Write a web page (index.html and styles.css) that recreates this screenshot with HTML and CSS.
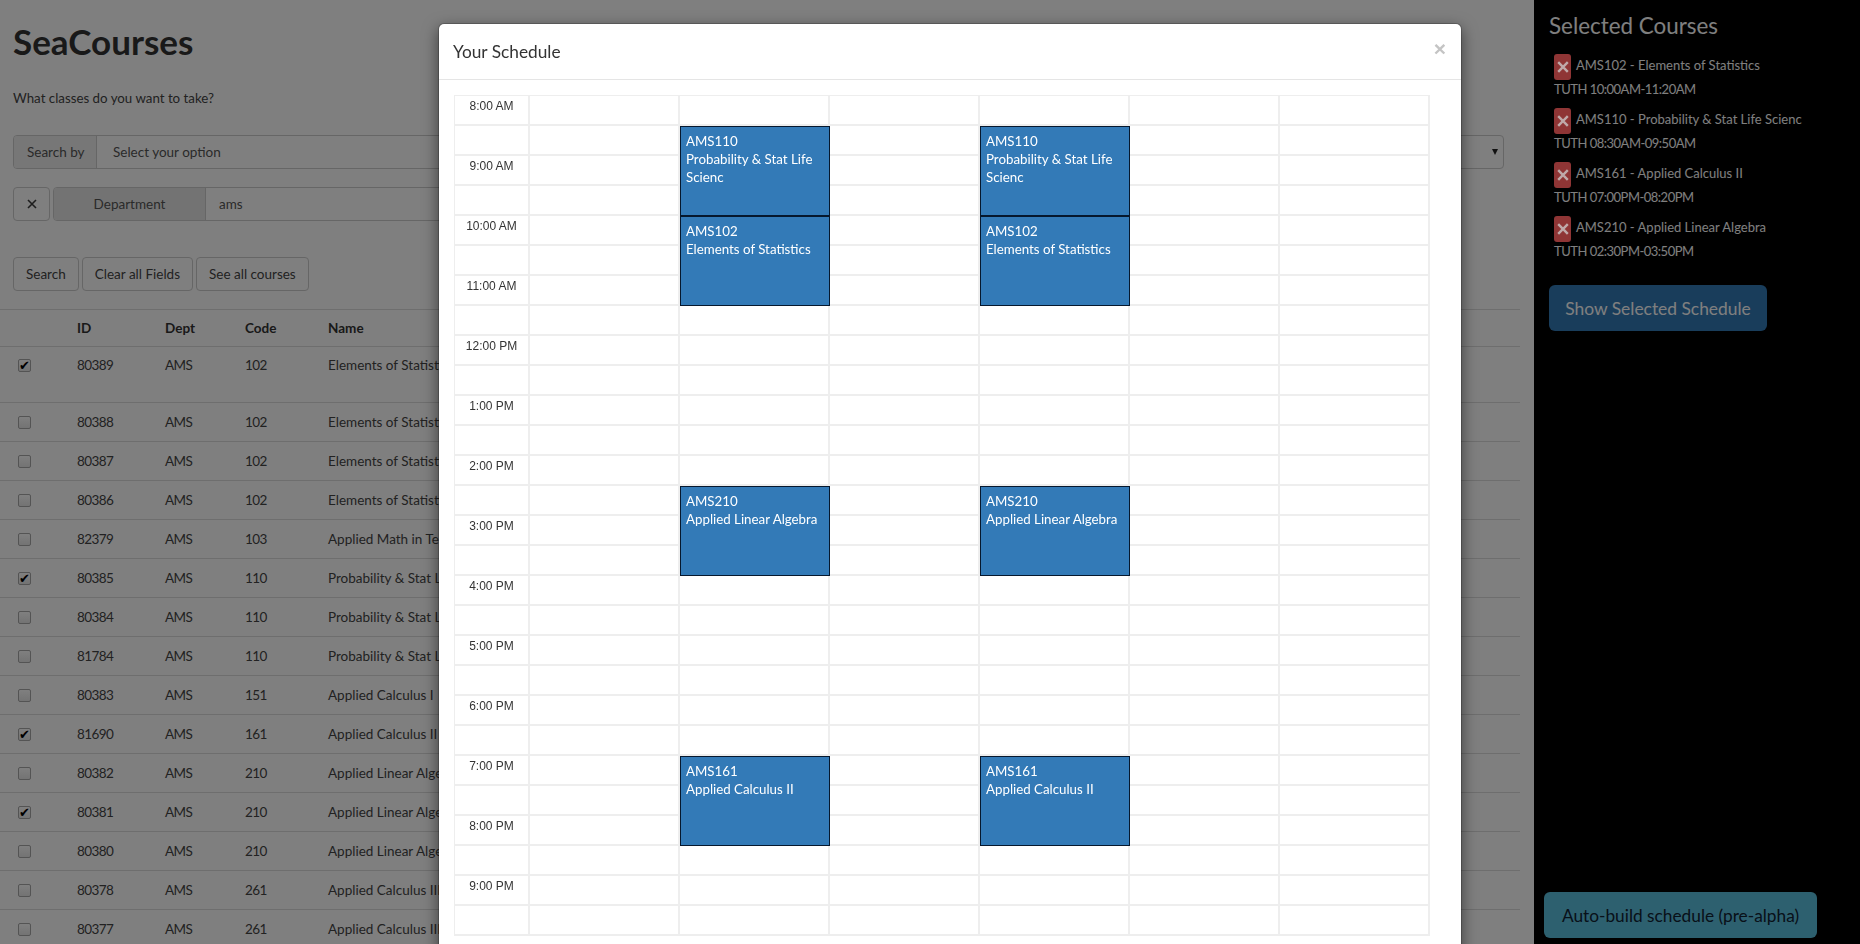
FILE: index.html
```html
<!DOCTYPE html>
<html lang="en">
<head>
<meta charset="utf-8">
<title>SeaCourses</title>
<link rel="stylesheet" href="styles.css">
</head>
<body>
<svg class="defs" width="0" height="0" aria-hidden="true"><symbol id="x" viewBox="0 0 10 10"><path d="M1 1 9 9M9 1 1 9" fill="none" stroke="currentColor"/></symbol></svg>
<div class="app">
  <main class="main">
    <h1 class="brand">SeaCourses</h1>
    <p class="lead">What classes do you want to take?</p>
    <div class="field search-by">
      <span class="addon">Search by</span>
      <span class="select-value">Select your option</span>
      <span class="arrow"></span>
    </div>
    <div class="filter-row">
      <button class="btn square"><svg class="x-icon"><use href="#x"/></svg></button>
      <div class="field filter">
        <span class="addon wide">Department</span>
        <span class="select-value short">ams</span>
      </div>
    </div>
    <div class="actions">
      <button class="btn">Search</button>
      <button class="btn">Clear all Fields</button>
      <button class="btn">See all courses</button>
    </div>
    <table class="courses">
      <thead><tr><th class="c0"></th><th class="c1">ID</th><th class="c2">Dept</th><th class="c3">Code</th><th>Name</th></tr></thead>
      <tbody>
        <tr class="tall"><td><input type="checkbox" checked></td><td>80389</td><td>AMS</td><td>102</td><td>Elements of Statistics</td></tr>
        <tr><td><input type="checkbox"></td><td>80388</td><td>AMS</td><td>102</td><td>Elements of Statistics</td></tr>
        <tr><td><input type="checkbox"></td><td>80387</td><td>AMS</td><td>102</td><td>Elements of Statistics</td></tr>
        <tr><td><input type="checkbox"></td><td>80386</td><td>AMS</td><td>102</td><td>Elements of Statistics</td></tr>
        <tr><td><input type="checkbox"></td><td>82379</td><td>AMS</td><td>103</td><td>Applied Math in Technology</td></tr>
        <tr><td><input type="checkbox" checked></td><td>80385</td><td>AMS</td><td>110</td><td>Probability &amp; Stat Life Scienc</td></tr>
        <tr><td><input type="checkbox"></td><td>80384</td><td>AMS</td><td>110</td><td>Probability &amp; Stat Life Scienc</td></tr>
        <tr><td><input type="checkbox"></td><td>81784</td><td>AMS</td><td>110</td><td>Probability &amp; Stat Life Scienc</td></tr>
        <tr><td><input type="checkbox"></td><td>80383</td><td>AMS</td><td>151</td><td>Applied Calculus I</td></tr>
        <tr><td><input type="checkbox" checked></td><td>81690</td><td>AMS</td><td>161</td><td>Applied Calculus II</td></tr>
        <tr><td><input type="checkbox"></td><td>80382</td><td>AMS</td><td>210</td><td>Applied Linear Algebra</td></tr>
        <tr><td><input type="checkbox" checked></td><td>80381</td><td>AMS</td><td>210</td><td>Applied Linear Algebra</td></tr>
        <tr><td><input type="checkbox"></td><td>80380</td><td>AMS</td><td>210</td><td>Applied Linear Algebra</td></tr>
        <tr><td><input type="checkbox"></td><td>80378</td><td>AMS</td><td>261</td><td>Applied Calculus III</td></tr>
        <tr><td><input type="checkbox"></td><td>80377</td><td>AMS</td><td>261</td><td>Applied Calculus III</td></tr>
      </tbody>
    </table>
  </main>
  <aside class="side">
    <h2 class="side-title">Selected Courses</h2>
    <ul class="picked">
      <li><div class="picked-line"><button class="del"><svg class="x-icon"><use href="#x"/></svg></button><span>AMS102 - Elements of Statistics</span></div><div class="picked-time">TUTH 10:00AM-11:20AM</div></li>
      <li><div class="picked-line"><button class="del"><svg class="x-icon"><use href="#x"/></svg></button><span>AMS110 - Probability &amp; Stat Life Scienc</span></div><div class="picked-time">TUTH 08:30AM-09:50AM</div></li>
      <li><div class="picked-line"><button class="del"><svg class="x-icon"><use href="#x"/></svg></button><span>AMS161 - Applied Calculus II</span></div><div class="picked-time">TUTH 07:00PM-08:20PM</div></li>
      <li><div class="picked-line"><button class="del"><svg class="x-icon"><use href="#x"/></svg></button><span>AMS210 - Applied Linear Algebra</span></div><div class="picked-time">TUTH 02:30PM-03:50PM</div></li>
    </ul>
    <button class="show-btn">Show Selected Schedule</button>
    <button class="auto-btn">Auto-build schedule (pre-alpha)</button>
  </aside>
</div>
<div class="backdrop"></div>
<div class="modal">
  <div class="modal-head"><h4>Your Schedule</h4><span class="close">×</span></div>
  <div class="modal-body">
    <div class="cal">
      <div class="cal-grid">
        <div class="cell time">8:00 AM</div><div class="cell"></div><div class="cell"></div><div class="cell"></div><div class="cell"></div><div class="cell"></div><div class="cell"></div>
        <div class="cell time"></div><div class="cell"></div><div class="cell"></div><div class="cell"></div><div class="cell"></div><div class="cell"></div><div class="cell"></div>
        <div class="cell time">9:00 AM</div><div class="cell"></div><div class="cell"></div><div class="cell"></div><div class="cell"></div><div class="cell"></div><div class="cell"></div>
        <div class="cell time"></div><div class="cell"></div><div class="cell"></div><div class="cell"></div><div class="cell"></div><div class="cell"></div><div class="cell"></div>
        <div class="cell time">10:00 AM</div><div class="cell"></div><div class="cell"></div><div class="cell"></div><div class="cell"></div><div class="cell"></div><div class="cell"></div>
        <div class="cell time"></div><div class="cell"></div><div class="cell"></div><div class="cell"></div><div class="cell"></div><div class="cell"></div><div class="cell"></div>
        <div class="cell time">11:00 AM</div><div class="cell"></div><div class="cell"></div><div class="cell"></div><div class="cell"></div><div class="cell"></div><div class="cell"></div>
        <div class="cell time"></div><div class="cell"></div><div class="cell"></div><div class="cell"></div><div class="cell"></div><div class="cell"></div><div class="cell"></div>
        <div class="cell time">12:00 PM</div><div class="cell"></div><div class="cell"></div><div class="cell"></div><div class="cell"></div><div class="cell"></div><div class="cell"></div>
        <div class="cell time"></div><div class="cell"></div><div class="cell"></div><div class="cell"></div><div class="cell"></div><div class="cell"></div><div class="cell"></div>
        <div class="cell time">1:00 PM</div><div class="cell"></div><div class="cell"></div><div class="cell"></div><div class="cell"></div><div class="cell"></div><div class="cell"></div>
        <div class="cell time"></div><div class="cell"></div><div class="cell"></div><div class="cell"></div><div class="cell"></div><div class="cell"></div><div class="cell"></div>
        <div class="cell time">2:00 PM</div><div class="cell"></div><div class="cell"></div><div class="cell"></div><div class="cell"></div><div class="cell"></div><div class="cell"></div>
        <div class="cell time"></div><div class="cell"></div><div class="cell"></div><div class="cell"></div><div class="cell"></div><div class="cell"></div><div class="cell"></div>
        <div class="cell time">3:00 PM</div><div class="cell"></div><div class="cell"></div><div class="cell"></div><div class="cell"></div><div class="cell"></div><div class="cell"></div>
        <div class="cell time"></div><div class="cell"></div><div class="cell"></div><div class="cell"></div><div class="cell"></div><div class="cell"></div><div class="cell"></div>
        <div class="cell time">4:00 PM</div><div class="cell"></div><div class="cell"></div><div class="cell"></div><div class="cell"></div><div class="cell"></div><div class="cell"></div>
        <div class="cell time"></div><div class="cell"></div><div class="cell"></div><div class="cell"></div><div class="cell"></div><div class="cell"></div><div class="cell"></div>
        <div class="cell time">5:00 PM</div><div class="cell"></div><div class="cell"></div><div class="cell"></div><div class="cell"></div><div class="cell"></div><div class="cell"></div>
        <div class="cell time"></div><div class="cell"></div><div class="cell"></div><div class="cell"></div><div class="cell"></div><div class="cell"></div><div class="cell"></div>
        <div class="cell time">6:00 PM</div><div class="cell"></div><div class="cell"></div><div class="cell"></div><div class="cell"></div><div class="cell"></div><div class="cell"></div>
        <div class="cell time"></div><div class="cell"></div><div class="cell"></div><div class="cell"></div><div class="cell"></div><div class="cell"></div><div class="cell"></div>
        <div class="cell time">7:00 PM</div><div class="cell"></div><div class="cell"></div><div class="cell"></div><div class="cell"></div><div class="cell"></div><div class="cell"></div>
        <div class="cell time"></div><div class="cell"></div><div class="cell"></div><div class="cell"></div><div class="cell"></div><div class="cell"></div><div class="cell"></div>
        <div class="cell time">8:00 PM</div><div class="cell"></div><div class="cell"></div><div class="cell"></div><div class="cell"></div><div class="cell"></div><div class="cell"></div>
        <div class="cell time"></div><div class="cell"></div><div class="cell"></div><div class="cell"></div><div class="cell"></div><div class="cell"></div><div class="cell"></div>
        <div class="cell time">9:00 PM</div><div class="cell"></div><div class="cell"></div><div class="cell"></div><div class="cell"></div><div class="cell"></div><div class="cell"></div>
        <div class="cell time"></div><div class="cell"></div><div class="cell"></div><div class="cell"></div><div class="cell"></div><div class="cell"></div><div class="cell"></div>
      </div>
      <div class="cal-grid events">
        <div class="event day-a at-830"><div>AMS110</div><div>Probability &amp; Stat Life Scienc</div></div>
        <div class="event day-b at-830"><div>AMS110</div><div>Probability &amp; Stat Life Scienc</div></div>
        <div class="event day-a at-1000"><div>AMS102</div><div>Elements of Statistics</div></div>
        <div class="event day-b at-1000"><div>AMS102</div><div>Elements of Statistics</div></div>
        <div class="event day-a at-230"><div>AMS210</div><div>Applied Linear Algebra</div></div>
        <div class="event day-b at-230"><div>AMS210</div><div>Applied Linear Algebra</div></div>
        <div class="event day-a at-700"><div>AMS161</div><div>Applied Calculus II</div></div>
        <div class="event day-b at-700"><div>AMS161</div><div>Applied Calculus II</div></div>
      </div>
    </div>
  </div>
</div>
</body>
</html>
```
FILE: styles.css
```css
* { box-sizing: border-box; }
html, body { margin: 0; height: 100%; overflow: hidden; }
body { font-family: "Lato", "Noto Sans", sans-serif; font-size: 14px; color: #333; background: #fff; }
.defs { position: absolute; }
.x-icon { display: block; width: 10px; height: 10px; margin: auto; stroke-width: 2; }
.app { display: flex; height: 944px; }
.main { width: 1534px; padding: 0 14px 0 0; overflow: hidden; flex: none; }
.brand { margin: 21px 0 0 13px; font-size: 35px; line-height: 40px; font-weight: 700; color: #333; }
.lead { margin: 27px 0 0 13px; line-height: 20px; font-size: 13.3px; color: #444; }
.field { display: flex; height: 34px; border: 1px solid #ccc; border-radius: 4px; background: #fff; align-items: center; overflow: hidden; }
.search-by { margin: 27px 0 0 13px; width: 1491px; }
.addon { background: #eee; height: 100%; display: flex; align-items: center; padding: 0 0 0 13px; border-right: 1px solid #ccc; color: #555; flex: none; width: 83px; font-size: 13.5px; white-space: nowrap; }
.addon.wide { width: 152px; padding: 0; justify-content: center; background: #e6e6e6; }
.select-value { color: #555; padding-left: 16px; flex: 1; font-size: 13.5px; }
.select-value.short { padding-left: 13px; }
.arrow { width: 0; height: 0; border-left: 3.5px solid transparent; border-right: 3.5px solid transparent; border-top: 6px solid #222; margin-right: 5px; }
.filter-row { display: flex; gap: 3px; margin: 18px 0 0 13px; }
.filter { width: 1390px; }
.btn { height: 34px; padding: 0 12px; border: 1px solid #ccc; border-radius: 4px; background: #fff; color: #444; font: inherit; font-size: 13.5px; }
.btn.square { width: 37px; padding: 0; color: #3c3c3c; }
.square .x-icon { stroke-width: 1.6; }
.actions { display: flex; gap: 3px; margin: 36px 0 0 13px; }
.courses { margin-top: 18px; width: 1520px; border-collapse: collapse; table-layout: fixed; }
.courses th { text-align: left; height: 37px; padding: 0; border-top: 1px solid #ddd; border-bottom: 1px solid #ddd; font-weight: 700; font-size: 13.5px; }
.courses td { height: 39px; padding: 0; border-bottom: 1px solid #ddd; vertical-align: middle; white-space: nowrap; font-size: 13.5px; color: #444; }
.courses td:nth-child(-n+4) { letter-spacing: -.6px; }
.courses tr.tall td { height: 56px; vertical-align: top; padding-top: 10px; }
.courses tr.tall input { margin-top: 2px; }
.courses .c0 { width: 77px; }
.courses .c1 { width: 88px; }
.courses .c2 { width: 80px; }
.courses .c3 { width: 83px; }
.courses input { appearance: none; display: block; position: relative; margin: 0 0 0 18px; width: 13px; height: 13px; border: 1px solid #a8a8a8; border-radius: 2px; background: linear-gradient(#fff, #e8e8e8); }
.courses input:checked::after { content: "✔"; position: absolute; inset: 0; font: 13px/11px "DejaVu Sans", sans-serif; color: #000; text-align: center; letter-spacing: 0; }
.side { flex: 1; background: #000; color: #fff; padding: 12px 0 0 15px; position: relative; }
.side-title { margin: 0; font-size: 22.4px; font-weight: 400; line-height: 28px; color: #fff; }
.picked { list-style: none; margin: 14px 0 0; padding: 0 0 0 5px; }
.picked li { height: 54px; }
.picked-line { display: flex; align-items: flex-start; gap: 5px; height: 30px; font-size: 13px; line-height: 20px; color: #fff; white-space: nowrap; }
.picked-line span { padding-top: 1px; }
.del { position: relative; z-index: 1; display: flex; align-items: center; width: 17px; height: 26px; padding: 0; border: none; border-radius: 3px; background: #8f3535; color: #bfa9a9; flex: none; }
.del .x-icon { width: 12px; height: 12px; }
.picked-time { font-size: 13px; letter-spacing: -.5px; line-height: 20px; margin-top: -5px; color: #fff; }
.show-btn { display: block; margin-top: 15px; width: 218px; height: 46px; border: none; border-radius: 6px; background: #337ab7; color: #fff; font: inherit; font-size: 17.4px; }
.auto-btn { position: absolute; left: 10px; bottom: 6px; width: 273px; height: 46px; border: none; border-radius: 6px; background: #5bc0de; color: #123; font: inherit; font-size: 17.3px; }
.backdrop { position: fixed; inset: 0; background: rgba(0,0,0,.5); }
.modal { position: absolute; z-index: 2; left: 438px; top: 23px; width: 1024px; background: #fff; border-radius: 6px; box-shadow: 0 5px 15px rgba(0,0,0,.5); border: 1px solid rgba(0,0,0,.2); background-clip: padding-box; }
.modal-head { height: 56px; border-bottom: 1px solid #e5e5e5; padding: 0 15px 0 14px; display: flex; justify-content: space-between; align-items: flex-start; }
.modal-head h4 { margin: 16px 0 0; font-size: 17.3px; line-height: 24px; font-weight: 400; color: #333; }
.close { font-family: "Liberation Sans", sans-serif; font-size: 21px; line-height: 24px; margin-top: 13px; font-weight: 700; color: #c4c4c4; }
.modal-body { padding: 15px 0 20px 15px; }
.cal { display: grid; width: 976px; border-top: 1px solid #eee; border-left: 1px solid #eee; }
.cal-grid { grid-area: 1 / 1; display: grid; grid-template-columns: 75px repeat(6, 150px); grid-auto-rows: 30px; }
.cell { border-right: 2px solid #eee; border-bottom: 2px solid #eee; }
.time { font-family: "Liberation Sans", sans-serif; font-size: 12px; line-height: 20px; color: #333; text-align: center; }
.event { border: 1px solid #06182e; background: #337ab7; color: #fff; font-size: 13.3px; line-height: 18px; padding: 5px 5px; }
.day-a { grid-column: 3; }
.day-b { grid-column: 5; }
.at-830 { grid-row: 2 / span 3; }
.at-1000 { grid-row: 5 / span 3; }
.at-230 { grid-row: 14 / span 3; }
.at-700 { grid-row: 23 / span 3; }
```
